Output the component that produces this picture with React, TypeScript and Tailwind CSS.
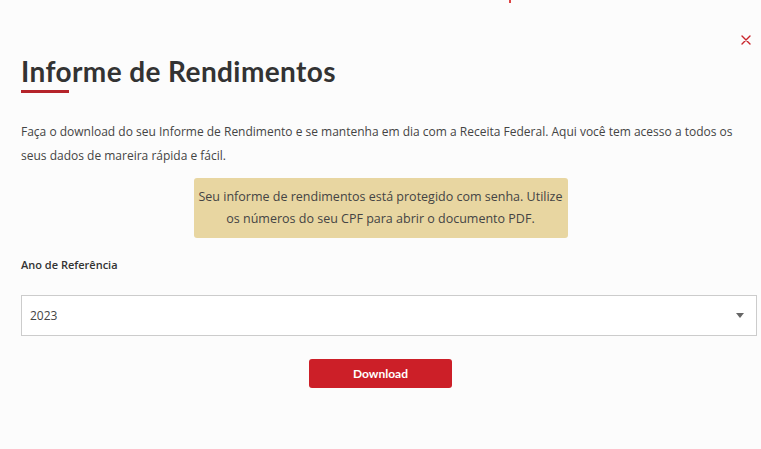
import React from 'react';

const body = { fontFamily: '"Open Sans", "Liberation Sans", sans-serif' };
const head = { fontFamily: 'Lato, "Open Sans", sans-serif' };

export default function App() {
  return (
    <div className="relative w-[761px] h-[449px] bg-[#fcfcfc] overflow-hidden text-[#333]" style={body}>
      {/* stray dot from page behind */}
      <div className="absolute left-[509px] top-0 w-[2px] h-[3px] bg-[#d44]" />

      <button className="absolute left-[741px] top-[35px]">
        <svg width="10" height="10" viewBox="0 0 10 10">
          <path d="M1 1 L9 9 M9 1 L1 9" stroke="#c9252c" strokeWidth="1.4" strokeLinecap="round" />
        </svg>
      </button>

      <div className="pt-[55px] px-[21px]">
        <h1 className="text-[28px] leading-[32px] font-bold text-[#333] tracking-[0.4px]" style={head}>
          Informe de Rendimentos
        </h1>
        <div className="mt-[3px] w-[48px] h-[3px] bg-[#b5242a]" />

        <p className="mt-[27px] text-[12px] leading-[24px] text-[#444] w-[730px]">
          Faça o download do seu Informe de Rendimento e se mantenha em dia com a Receita Federal. Aqui você tem acesso a todos os seus dados de mareira rápida e fácil.
        </p>

        <div className="flex justify-center mt-[10px]">
          <div className="w-[374px] h-[60px] bg-[#e8d6a1] rounded-[3px] flex items-center justify-center text-center text-[12.5px] leading-[22px] text-[#444]">
            <span>
              Seu informe de rendimentos está protegido com senha. Utilize
              <br />
              os números do seu CPF para abrir o documento PDF.
            </span>
          </div>
        </div>

        <div className="mt-[19px] text-[11px] font-semibold text-[#333] leading-[16px]">
          Ano de Referência
        </div>

        <div className="mt-[22px] mr-[-17px] h-[41px] border border-[#ccc] bg-white flex items-center justify-between pl-[8px] pr-[12px]">
          <span className="text-[12px] text-[#444]">2023</span>
          <svg width="8" height="5" viewBox="0 0 8 5">
            <path d="M0 0 L8 0 L4 5 Z" fill="#666" />
          </svg>
        </div>

        <div className="flex justify-center mt-[23px]">
          <button
            className="w-[143px] h-[29px] bg-[#cc1f28] rounded-[3px] text-white text-[12px] font-bold"
            style={head}
          >
            Download
          </button>
        </div>
      </div>
    </div>
  );
}
